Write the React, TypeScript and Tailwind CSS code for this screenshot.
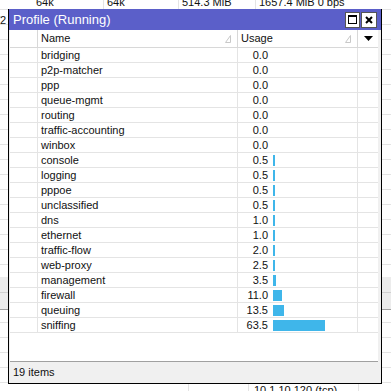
import React from 'react';

const rows: [string, number][] = [
  ['bridging', 0],
  ['p2p-matcher', 0],
  ['ppp', 0],
  ['queue-mgmt', 0],
  ['routing', 0],
  ['traffic-accounting', 0],
  ['winbox', 0],
  ['console', 0.5],
  ['logging', 0.5],
  ['pppoe', 0.5],
  ['unclassified', 0.5],
  ['dns', 1],
  ['ethernet', 1],
  ['traffic-flow', 2],
  ['web-proxy', 2.5],
  ['management', 3.5],
  ['firewall', 11],
  ['queuing', 13.5],
  ['sniffing', 63.5],
];

const barWidth = (v: number) => (v <= 0 ? 0 : Math.max(2, Math.round(v * 0.82)));

const SortMark = () => (
  <svg width="6" height="8" viewBox="0 0 6 8" className="shrink-0">
    <path d="M0.5 7.5 L5.5 0.5 L5.5 7.5 Z" fill="none" stroke="#c8c8c8" strokeWidth="1" />
  </svg>
);

const BgRow = ({ children, className = '' }: { children?: React.ReactNode; className?: string }) => (
  <div className={`h-[15px] shrink-0 border-b border-[#e4e4e4] flex ${className}`}>{children}</div>
);

export default function App() {
  return (
    <div className="relative w-[391px] h-[391px] overflow-hidden bg-white text-[11px] text-[#111] font-['Liberation_Sans',Arial,sans-serif]">
      {/* window behind: interface table */}
      <div className="flex flex-col">
        <div className="h-[10px] shrink-0 flex border-b border-[#e4e4e4] overflow-hidden">
          <div className="w-[33px]" />
          <div className="w-[70px] pl-[3px] -mt-[4px] leading-[13px]">64k</div>
          <div className="w-[75px] pl-[3px] -mt-[4px] leading-[13px] border-l border-[#e4e4e4]">64k</div>
          <div className="w-[77px] pl-[3px] -mt-[4px] leading-[13px] border-l border-[#e4e4e4]">514.3 MiB</div>
          <div className="flex-1 pl-[3px] -mt-[4px] leading-[13px] border-l border-[#e4e4e4] whitespace-nowrap">1657.4 MiB 0 bps</div>
        </div>
        <BgRow>
          <div className="pt-[4px] leading-[13px] -ml-[3px]">/2</div>
        </BgRow>
        {Array.from({ length: 16 }).map((_, i) => (
          <BgRow key={i} />
        ))}
        <div className="h-[12px] shrink-0" />
        <div className="h-[16px] shrink-0 bg-[#ececec] border-b border-[#d0d0d0]" />
        <div className="h-[17px] shrink-0 bg-[#ececec] border-b border-[#a0a0a0]" />
        <div className="h-[13px] shrink-0 border-b border-[#e4e4e4]" />
        {Array.from({ length: 4 }).map((_, i) => (
          <BgRow key={i} />
        ))}
        <BgRow>
          <div className="w-[188px]" />
          <div className="w-[60px] border-l border-[#e4e4e4]" />
          <div className="w-[110px] border-l border-[#e4e4e4] pl-[5px] leading-[13px] pt-[1px] whitespace-nowrap">10.1.10.120 (tcp)</div>
          <div className="flex-1 border-l border-[#e4e4e4]" />
        </BgRow>
      </div>

      {/* Profile window */}
      <div className="absolute left-[8px] top-[9px] w-[374px] h-[375px] flex flex-col bg-[#f0f0f0] border-x border-b border-black">
        <div className="h-[21px] shrink-0 bg-[#5b5fc9] flex items-center pl-[4px] pr-[4px]">
          <span className="text-white text-[13px] leading-none">Profile (Running)</span>
          <div className="ml-auto flex gap-[1px]">
            <div className="w-[15px] h-[16px] bg-white border border-[#555] flex items-center justify-center">
              <div className="w-[9px] h-[9px] border border-black border-t-2" />
            </div>
            <div className="w-[16px] h-[16px] bg-white border border-[#555] flex items-center justify-center">
              <svg width="8" height="8" viewBox="0 0 8 8">
                <path d="M1 1 L7 7 M7 1 L1 7" stroke="#000" strokeWidth="2" />
              </svg>
            </div>
          </div>
        </div>

        <div className="flex-1 flex flex-col pl-[1px] pr-[3px]">
          <div className="h-[332px] shrink-0 bg-white border-b border-[#a0a0a0] flex flex-col">
            <div className="h-[18px] shrink-0 flex border-b border-[#d8d8d8]">
              <div className="w-[28px] border-r border-[#d8d8d8]" />
              <div className="w-[200px] border-r border-[#d8d8d8] flex items-center pl-[3px] pr-[6px]">
                <span className="flex-1">Name</span>
                <SortMark />
              </div>
              <div className="w-[120px] border-r border-[#d8d8d8] flex items-center pl-[3px] pr-[6px]">
                <span className="flex-1">Usage</span>
                <SortMark />
              </div>
              <div className="flex-1 flex items-center justify-center">
                <svg width="9" height="5" viewBox="0 0 9 5">
                  <path d="M0 0 H9 L4.5 5 Z" fill="#000" />
                </svg>
              </div>
            </div>
            {rows.map(([name, v]) => (
              <div key={name} className="h-[15px] shrink-0 flex border-b border-[#e4e4e4]">
                <div className="w-[28px] border-r border-[#e4e4e4]" />
                <div className="w-[200px] border-r border-[#e4e4e4] pl-[3px] leading-[14px]">{name}</div>
                <div className="w-[120px] border-r border-[#e4e4e4] flex items-center">
                  <span className="w-[30px] text-right leading-[14px]">{v.toFixed(1)}</span>
                  {v > 0 && (
                    <div className="ml-[5px] h-[11px] bg-[#3fb6ea]" style={{ width: barWidth(v) }} />
                  )}
                </div>
                <div className="flex-1" />
              </div>
            ))}
          </div>
          <div className="flex-1 flex items-center pl-[3px]">19 items</div>
        </div>
      </div>
    </div>
  );
}
